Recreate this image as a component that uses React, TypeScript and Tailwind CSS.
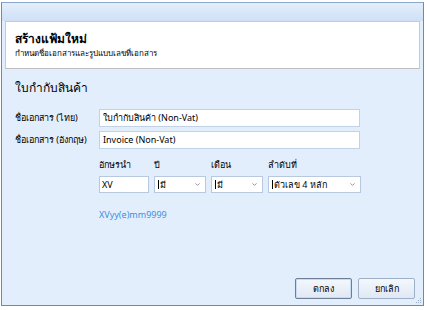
import { ChevronDown } from 'lucide-react';

const font = { fontFamily: 'Tahoma, "Noto Sans", "Liberation Sans", sans-serif' };

function Combo({ value, width }: { value: string; width: string }) {
  return (
    <div
      className={`flex h-[17px] ${width} items-center justify-between border border-[#b8c9df] bg-white pl-[3px] pr-[4px] text-[9px] text-black`}
    >
      <span className="border-l border-black pl-[1px] leading-none">{value}</span>
      <ChevronDown size={7} strokeWidth={3} className="text-[#888]" />
    </div>
  );
}

function Grip() {
  return (
    <svg width="6" height="6" viewBox="0 0 6 6" className="absolute bottom-[1px] right-[1px]">
      <rect x="4" y="0" width="1" height="1" fill="#9aaec8" />
      <rect x="2" y="2" width="1" height="1" fill="#9aaec8" />
      <rect x="4" y="2" width="1" height="1" fill="#9aaec8" />
      <rect x="0" y="4" width="1" height="1" fill="#9aaec8" />
      <rect x="2" y="4" width="1" height="1" fill="#9aaec8" />
      <rect x="4" y="4" width="1" height="1" fill="#9aaec8" />
    </svg>
  );
}

export default function App() {
  return (
    <div className="h-[310px] w-[427px] bg-white pl-[1px] pt-[2px]" style={font}>
      <div className="relative flex h-[304px] w-[423px] flex-col border border-[#6a89b3] border-t-[#8aa6cb] bg-[#e3eefc]">
        <div className="h-[18px] bg-gradient-to-b from-[#e4eefb] to-[#cfe0f6]" />
        <div className="mx-[3px] flex h-[48px] flex-col justify-center gap-[4px] border border-[#c9c9c9] border-b-[#bdbdbd] bg-white px-[9px]">
          <div className="text-[12px] font-bold leading-none text-black">สร้างแฟ้มใหม่</div>
          <div className="text-[8px] leading-none text-black">กำหนดชื่อเอกสารและรูปแบบเลขที่เอกสาร</div>
        </div>
        <div className="flex flex-1 flex-col px-[13px] pt-[13px]">
          <div className="text-[12px] leading-none text-black">ใบกำกับสินค้า</div>
          <div className="mt-[15px] flex items-center">
            <div className="w-[84px] text-[9px] text-black">ชื่อเอกสาร (ไทย)</div>
            <div className="flex h-[18px] w-[261px] items-center border border-[#c2d2e6] bg-white px-[3px] text-[9px] text-black">
              ใบกำกับสินค้า (Non-Vat)
            </div>
          </div>
          <div className="mt-[4px] flex items-center">
            <div className="w-[84px] text-[9px] text-black">ชื่อเอกสาร (อังกฤษ)</div>
            <div className="flex h-[18px] w-[261px] items-center border border-[#c2d2e6] bg-white px-[3px] text-[9px] text-black">
              Invoice (Non-Vat)
            </div>
          </div>
          <div className="ml-[84px] mt-[9px] flex gap-[5px] text-[9px] text-black">
            <div className="flex w-[50px] flex-col gap-[4px]">
              <span className="leading-[14px]">อักษรนำ</span>
              <div className="flex h-[17px] items-center border border-[#b8c9df] bg-white px-[2px]">XV</div>
            </div>
            <div className="flex w-[52px] flex-col gap-[4px]">
              <span className="leading-[14px]">ปี</span>
              <Combo value="มี" width="w-[52px]" />
            </div>
            <div className="flex w-[52px] flex-col gap-[4px]">
              <span className="leading-[14px]">เดือน</span>
              <Combo value="มี" width="w-[52px]" />
            </div>
            <div className="flex w-[93px] flex-col gap-[4px]">
              <span className="leading-[14px]">ลำดับที่</span>
              <Combo value="ตัวเลข 4 หลัก" width="w-[93px]" />
            </div>
          </div>
          <div className="ml-[84px] mt-[15px] text-[9px] text-[#3d8fe6]">XVyy(e)mm9999</div>
          <div className="-mr-[5px] mt-auto mb-[6px] flex justify-end gap-[6px]">
            <button className="h-[21px] w-[57px] rounded-[2px] border border-[#6b7f99] bg-gradient-to-b from-[#f4f8fd] to-[#dfe8f4] text-[9px] text-black shadow-[inset_0_0_0_1px_#c9dbf0]">
              ตกลง
            </button>
            <button className="h-[21px] w-[57px] rounded-[2px] border border-[#9db0c8] bg-gradient-to-b from-[#f4f8fd] to-[#dfe8f4] text-[9px] text-black">
              ยกเลิก
            </button>
          </div>
        </div>
        <Grip />
      </div>
    </div>
  );
}
